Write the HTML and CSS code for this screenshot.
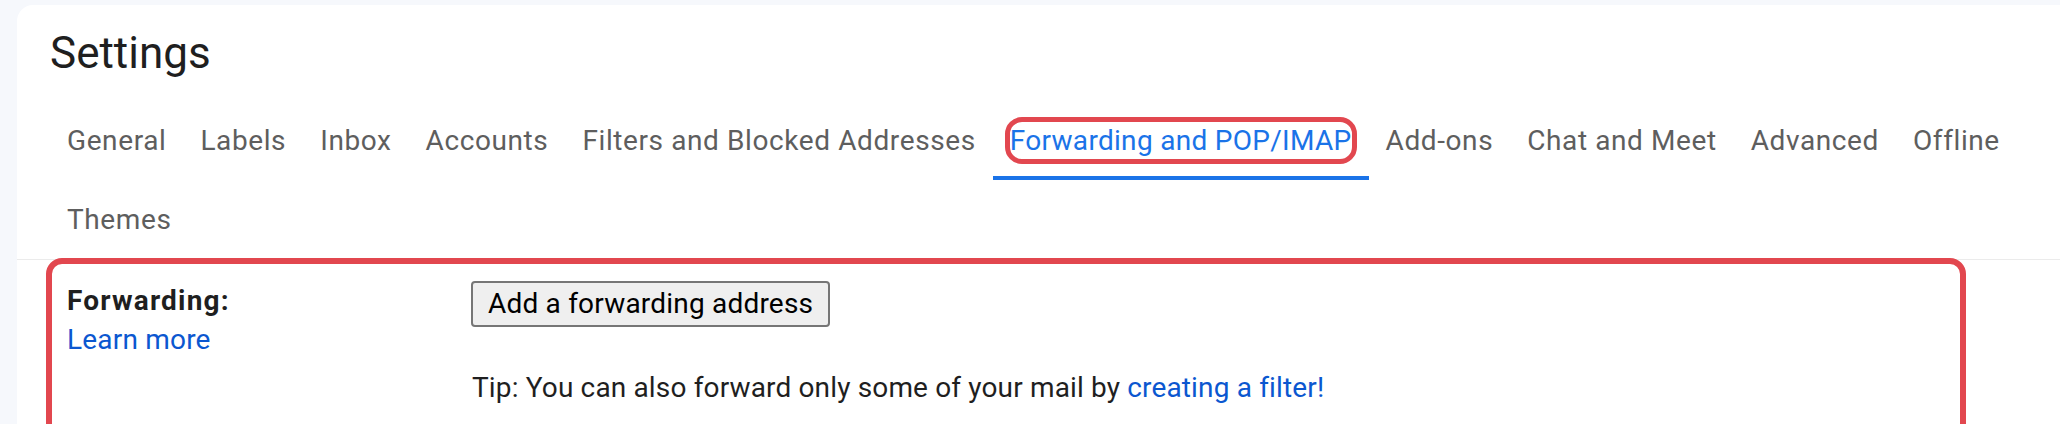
FILE: index.html
```html
<!DOCTYPE html>
<html lang="en">
<head>
<meta charset="utf-8">
<title>Settings</title>
<link rel="stylesheet" href="styles.css">
</head>
<body>
<div class="card">
  <h1 class="title">Settings</h1>
  <nav class="tabs">
    <a class="tab">General</a>
    <a class="tab">Labels</a>
    <a class="tab">Inbox</a>
    <a class="tab">Accounts</a>
    <a class="tab">Filters and Blocked Addresses</a>
    <a class="tab tab-active"><span class="tab-mark">Forwarding and POP/IMAP</span></a>
    <a class="tab">Add-ons</a>
    <a class="tab">Chat and Meet</a>
    <a class="tab">Advanced</a>
    <a class="tab">Offline</a>
    <a class="tab">Themes</a>
  </nav>
  <section class="highlight">
    <div class="row">
      <div class="label">
        <span class="label-title">Forwarding:</span>
        <a class="link">Learn more</a>
      </div>
      <div class="value">
        <button class="btn" type="button">Add a forwarding address</button>
        <p class="tip">Tip: You can also forward only some of your mail by <a class="link">creating a filter!</a></p>
      </div>
    </div>
  </section>
</div>
</body>
</html>
```
FILE: styles.css
```css
html, body {
  margin: 0;
  padding: 0;
}
body {
  background: #f6f8fc;
  font-family: Roboto, "Liberation Sans", Arial, sans-serif;
  color: #1f1f1f;
  overflow: hidden;
  height: 424px;
}
.card {
  margin: 5px 0 0 17px;
  background: #ffffff;
  border-top-left-radius: 16px;
  height: 500px;
}
.title {
  margin: 0;
  padding: 20px 0 0 33px;
  font-size: 44px;
  line-height: 56px;
  font-weight: 400;
  color: #1f1f1f;
}
.tabs {
  display: flex;
  flex-wrap: wrap;
  margin-top: 20px;
  padding: 0 20px 0 33px;
  border-bottom: 1px solid #ebebeb;
}
.tab {
  display: block;
  height: 79px;
  line-height: 79px;
  padding: 0 17px;
  font-size: 28px;
  letter-spacing: 0.6px;
  color: #5e5e5e;
  white-space: nowrap;
  cursor: pointer;
}
.tab-wide {
  letter-spacing: 0.5px;
}
.tab-active {
  color: #1a73e8;
  letter-spacing: 0.3px;
  box-shadow: inset 0 -4px 0 #1a73e8;
}
.tab-mark {
  display: inline-block;
  line-height: 37px;
  outline: 5px solid #e2474f;
  border-radius: 12px;
}
.highlight {
  margin: -2px 0 0 29px;
  width: 1920px;
  box-sizing: border-box;
  height: 240px;
  border: 6px solid #e2474f;
  border-radius: 16px;
  padding: 17px 0 0 15px;
}
.row {
  display: grid;
  grid-template-columns: 404px 1fr;
  align-items: start;
  font-size: 28px;
  line-height: 1.4;
}
.label-title {
  display: block;
  font-weight: 700;
  letter-spacing: 1.2px;
  color: #1f1f1f;
}
.link {
  display: inline;
  color: #0b57d0;
  cursor: pointer;
}
.label .link {
  display: block;
  letter-spacing: 0.2px;
}
.btn {
  display: block;
  height: 46px;
  padding: 0 15px;
  margin: 0;
  font-family: Roboto, "Liberation Sans", Arial, sans-serif;
  font-size: 28px;
  line-height: 42px;
  letter-spacing: 0.2px;
  color: #000000;
  background: #efefef;
  border: 2px solid #767676;
  border-radius: 4px;
}
.tip {
  margin: 41px 0 0 1px;
  letter-spacing: 0.15px;
  color: #1f1f1f;
}
```
